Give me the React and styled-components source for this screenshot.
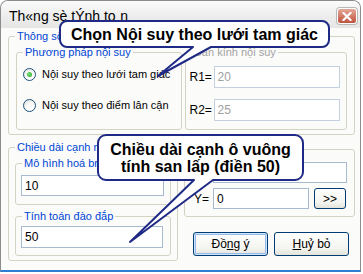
import React from "react";
import styled, { createGlobalStyle, css } from "styled-components";

const GlobalStyle = createGlobalStyle`
  html, body {
    margin: 0;
    padding: 0;
    background: #ffffff;
  }
  body {
    width: 363px;
    height: 274px;
    overflow: hidden;
    font-family: "Liberation Sans", Arial, sans-serif;
    font-size: 11px;
    color: #000;
  }
`;

const Screen = styled.div`
  position: relative;
  width: 363px;
  height: 274px;
  background: #ffffff;
`;

const Window = styled.div`
  box-sizing: border-box;
  width: 361px;
  height: 272px;
  display: flex;
  flex-direction: column;
  border: 1px solid #8c8c8c;
  border-bottom: 2px solid #2f80d4;
  border-radius: 8px 8px 0 0;
  background: #fbfbf9;
  overflow: hidden;
`;

const TitleBar = styled.div`
  flex: none;
  height: 27px;
  display: flex;
  align-items: center;
  justify-content: space-between;
  padding: 0 3px 0 8px;
  background: linear-gradient(#fbfbfb, #ececec 60%, #e6e6e6);
`;

const Title = styled.span`
  font-size: 14px;
  color: #000;
  padding-top: 2px;
`;

const CloseButton = styled.div`
  box-sizing: border-box;
  width: 20px;
  height: 16px;
  margin-top: 3px;
  border: 1px solid #ffffff;
  border-radius: 3px;
  box-shadow: 0 0 0 1px #b8b8b8;
  background: linear-gradient(#e4a898, #cc6a56 70%, #bc5642);
  display: flex;
  align-items: center;
  justify-content: center;
`;

const Body = styled.div`
  flex: 1;
  display: flex;
  flex-direction: column;
  padding: 2px 0 0 7px;
`;

const Group = styled.fieldset`
  box-sizing: border-box;
  margin: 0;
  min-width: 0;
  border: 1px solid #d3d3c4;
  border-radius: 3px;
  padding: ${(p) => p.$pad};
  width: ${(p) => p.$w}px;
  ${(p) =>
    p.$h &&
    css`
      height: ${p.$h}px;
    `}
`;

const Legend = styled.legend`
  padding: 0 2px;
  margin-left: ${(p) => p.$ml}px;
  line-height: 13px;
  font-size: 11px;
  color: ${(p) => (p.$disabled ? "#a3a3a3" : "#0046d5")};
  white-space: nowrap;
`;

const Row = styled.div`
  display: flex;
  align-items: ${(p) => p.$align || "stretch"};
  gap: ${(p) => p.$gap || 0}px;
`;

const Column = styled.div`
  display: flex;
  flex-direction: column;
  gap: ${(p) => p.$gap || 0}px;
  margin-top: ${(p) => p.$mt || 0}px;
`;

const RadioRow = styled.label`
  display: flex;
  align-items: center;
  height: 16px;
  gap: 6px;
  white-space: nowrap;
`;

const RadioDot = styled.span`
  position: relative;
  box-sizing: border-box;
  width: 13px;
  height: 13px;
  border-radius: 50%;
  border: 1px solid #1d5281;
  background: radial-gradient(circle at 65% 70%, #ffffff 30%, #dcdcd4 100%);
  ${(p) =>
    p.$checked &&
    css`
      &::after {
        content: "";
        position: absolute;
        left: 3px;
        top: 3px;
        width: 5px;
        height: 5px;
        border-radius: 50%;
        background: radial-gradient(circle at 40% 40%, #7be07b, #21a121);
      }
    `}
`;

const FieldLabel = styled.span`
  width: ${(p) => p.$w}px;
  flex: none;
  font-size: ${(p) => p.$fs || 11}px;
  color: #000;
`;

const Input = styled.div`
  box-sizing: border-box;
  width: ${(p) => p.$w}px;
  height: ${(p) => p.$h || 21}px;
  border: 1px solid ${(p) => (p.$disabled ? "#c3d0de" : "#a7bad0")};
  background: #ffffff;
  padding: 0 3px;
  display: flex;
  align-items: center;
  font-size: 12px;
  color: ${(p) => (p.$disabled ? "#a0a0a0" : "#000")};
`;

const Button = styled.div`
  box-sizing: border-box;
  width: ${(p) => p.$w}px;
  height: ${(p) => p.$h}px;
  border: 1px solid #003c74;
  border-radius: 3px;
  background: linear-gradient(#ffffff, #f4f4f0 70%, #e3e3db);
  display: flex;
  align-items: center;
  justify-content: center;
  font-size: 12px;
  color: #000;
  ${(p) =>
    p.$default &&
    css`
      box-shadow: inset 0 0 0 1px #cee7ff, inset 0 0 0 2px #98b8ea;
    `}
`;

const Key = styled.span`
  text-decoration: underline;
`;

const Overlay = styled.svg`
  position: absolute;
  left: 0;
  top: 0;
  pointer-events: none;
`;

const CalloutText = styled.div`
  position: absolute;
  left: ${(p) => p.$x}px;
  top: ${(p) => p.$y}px;
  width: ${(p) => p.$w}px;
  height: ${(p) => p.$h}px;
  display: flex;
  flex-direction: column;
  align-items: center;
  justify-content: center;
  font-size: 16px;
  font-weight: bold;
  line-height: 17px;
  color: #000;
  white-space: nowrap;
`;

function bubble(x1, y1, x2, y2, r, baseA, baseB, tipX, tipY) {
  return [
    `M ${x1 + r} ${y1}`,
    `H ${x2 - r}`,
    `A ${r} ${r} 0 0 1 ${x2} ${y1 + r}`,
    `V ${y2 - r}`,
    `A ${r} ${r} 0 0 1 ${x2 - r} ${y2}`,
    `H ${baseB}`,
    `L ${tipX} ${tipY}`,
    `L ${baseA} ${y2}`,
    `H ${x1 + r}`,
    `A ${r} ${r} 0 0 1 ${x1} ${y2 - r}`,
    `V ${y1 + r}`,
    `A ${r} ${r} 0 0 1 ${x1 + r} ${y1}`,
    "Z",
  ].join(" ");
}

const Callouts = () => (
  <>
    <Overlay width="363" height="274" viewBox="0 0 363 274">
      <path
        d={bubble(60, 21, 329, 47, 7, 193, 211, 158, 76)}
        fill="#ffffff"
        stroke="#1f2a86"
        strokeWidth="2"
        strokeLinejoin="round"
      />
      <path
        d={bubble(98, 135, 303, 180, 8, 194, 213, 130, 242)}
        fill="#ffffff"
        stroke="#1f2a86"
        strokeWidth="2"
        strokeLinejoin="round"
      />
    </Overlay>
    <CalloutText $x={61} $y={22} $w={267} $h={24}>
      Chọn Nội suy theo lưới tam giác
    </CalloutText>
    <CalloutText $x={99} $y={136} $w={203} $h={43}>
      <span>Chiều dài cạnh ô vuông</span>
      <span>tính san lấp (điền 50)</span>
    </CalloutText>
  </>
);

export default function App() {
  return (
    <Screen>
      <GlobalStyle />
      <Window>
        <TitleBar>
          <Title>Th«ng sè tÝnh to¸n</Title>
          <CloseButton>
            <svg width="10" height="9" viewBox="0 0 10 9">
              <path d="M1.5 1 L8.5 8 M8.5 1 L1.5 8" stroke="#fff" strokeWidth="2.2" strokeLinecap="square" />
            </svg>
          </CloseButton>
        </TitleBar>
        <Body>
          <Group $w={347} $pad="3px 7px 4px 7px">
            <Legend $ml={-1}>Thông số</Legend>
            <Row $gap={3}>
              <Group $w={166} $h={84} $pad="7px 0 0 6px">
                <Legend $ml={0}>Phương pháp nội suy</Legend>
                <Column $gap={15}>
                  <RadioRow>
                    <RadioDot $checked />
                    Nội suy theo lưới tam giác
                  </RadioRow>
                  <RadioRow>
                    <RadioDot />
                    Nội suy theo điểm lân cận
                  </RadioRow>
                </Column>
              </Group>
              <Group $w={163} $h={84} $pad="7px 0 0 4px">
                <Legend $ml={3} $disabled>
                  Bán kính nội suy
                </Legend>
                <Column $gap={11}>
                  <Row $align="center">
                    <FieldLabel $w={24} $fs={12}>R1=</FieldLabel>
                    <Input $w={126} $h={22} $disabled>20</Input>
                  </Row>
                  <Row $align="center">
                    <FieldLabel $w={24} $fs={12}>R2=</FieldLabel>
                    <Input $w={126} $h={22} $disabled>25</Input>
                  </Row>
                </Column>
              </Group>
            </Row>
          </Group>

          <Row $gap={6} style={{ marginTop: 6 }} $align="flex-start">
            <Group $w={170} $pad="3px 6px 4px 6px">
              <Legend $ml={0}>Chiều dài cạnh mắt</Legend>
              <Group $w={156} $pad="5px 6px 8px 5px">
                <Legend $ml={1}>Mô hình hoá bm</Legend>
                <Input $w={143}>10</Input>
              </Group>
              <Group $w={156} $pad="3px 6px 7px 5px" style={{ marginTop: 5 }}>
                <Legend $ml={1}>Tính toán đào đắp</Legend>
                <Input $w={142} $h={22}>50</Input>
              </Group>
            </Group>

            <Column $mt={2}>
              <Group $w={171} $pad="6px 7px 7px 9px">
                <Legend $ml={-3}>Gốc</Legend>
                <Column $gap={5}>
                  <Row $align="center">
                    <FieldLabel $w={19} $fs={12}>X=</FieldLabel>
                    <Input $w={134}>0</Input>
                  </Row>
                  <Row $align="center" $gap={5}>
                    <FieldLabel $w={19} $fs={12} style={{ marginRight: -5 }}>Y=</FieldLabel>
                    <Input $w={96}>0</Input>
                    <Button $w={32} $h={21}>&gt;&gt;</Button>
                  </Row>
                </Column>
              </Group>
              <Row $gap={6} style={{ marginTop: 15, paddingLeft: 9 }}>
                <Button $w={75} $h={24} $default>
                  Đồ<Key>n</Key>g ý
                </Button>
                <Button $w={75} $h={24}>
                  <Key>H</Key>uỷ bỏ
                </Button>
              </Row>
            </Column>
          </Row>
        </Body>
      </Window>
      <Callouts />
    </Screen>
  );
}
